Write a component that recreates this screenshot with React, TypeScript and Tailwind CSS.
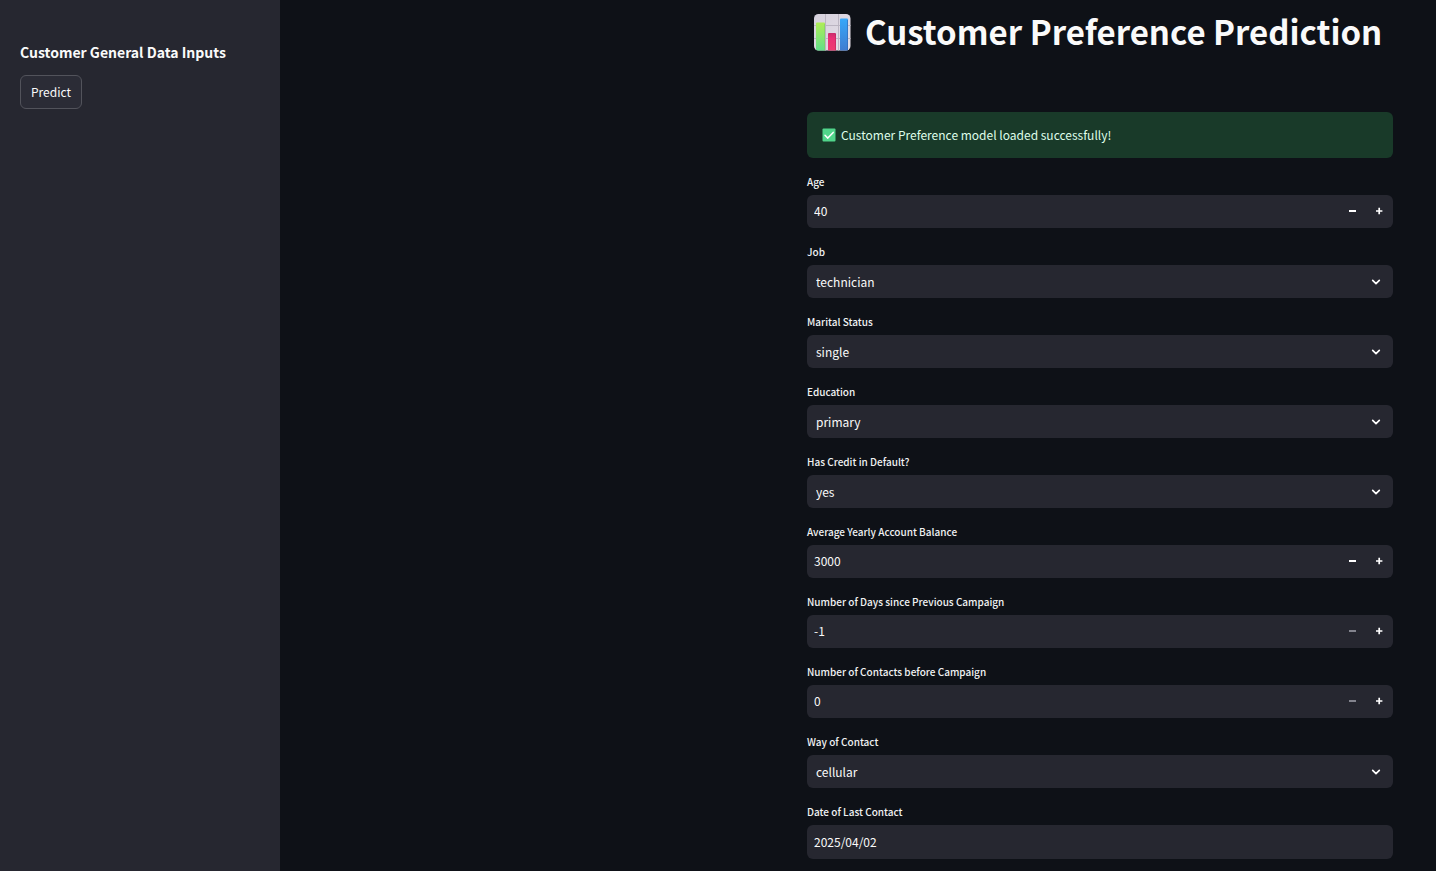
import { useState } from 'react';

type NumberFieldProps = { id: string; label: string; initial: number; min: number };
type SelectFieldProps = { id: string; label: string; options: string[] };

const labelClass = 'block h-[14px] text-[10px] leading-[14px] font-medium text-[#f0f1f3]';
const controlClass =
  'flex w-full items-center overflow-hidden rounded-md bg-[#262730] text-[12px] text-[#fafafa]';

function ChartLogo() {
  return (
    <svg viewBox="0 0 38 38" className="size-[38px] shrink-0" aria-hidden="true">
      <defs>
        <linearGradient id="paper" x1="0" y1="0" x2="1" y2="1">
          <stop offset="0" stopColor="#d5d0dc" />
          <stop offset="1" stopColor="#e5dfe8" />
        </linearGradient>
        <linearGradient id="greenBar" x1="0" y1="0" x2="0" y2="1">
          <stop offset="0" stopColor="#b0ed56" />
          <stop offset="1" stopColor="#60df8c" />
        </linearGradient>
        <linearGradient id="redBar" x1="0" y1="0" x2="0" y2="1">
          <stop offset="0" stopColor="#c92d6c" />
          <stop offset="0.3" stopColor="#e93176" />
          <stop offset="1" stopColor="#ee3c70" />
        </linearGradient>
        <linearGradient id="blueBar" x1="0" y1="0" x2="0" y2="1">
          <stop offset="0" stopColor="#38a8fa" />
          <stop offset="1" stopColor="#407bd0" />
        </linearGradient>
        <clipPath id="sheet">
          <rect x="1" y="1" width="36.5" height="36.5" rx="4.5" />
        </clipPath>
      </defs>
      <g clipPath="url(#sheet)">
        <rect width="38" height="38" fill="url(#paper)" />
        <path d="M12.5 0v38M25.5 0v38M0 12.5h38M0 25.5h38" stroke="#bbb5c2" strokeWidth="1" />
        <rect x="3" y="9.5" width="9" height="28.5" rx="1" fill="url(#greenBar)" />
        <rect x="15" y="20" width="8" height="18" rx="1" fill="url(#redBar)" />
        <rect x="27" y="5.5" width="8" height="32.5" rx="1" fill="url(#blueBar)" />
        <path d="M11.5 11v27" stroke="#83cf62" strokeWidth="1" opacity="0.6" />
        <path d="M22.5 21v17" stroke="#b82860" strokeWidth="1" opacity="0.6" />
        <path d="M34.5 7v31" stroke="#2f64b5" strokeWidth="1" opacity="0.6" />
      </g>
    </svg>
  );
}

function CheckMark() {
  return (
    <svg viewBox="0 0 14 14" className="size-[14px] shrink-0" aria-hidden="true">
      <rect x="0.5" y="0.5" width="13" height="13" rx="1" fill="#51d58b" />
      <path d="M3 7.3l2.8 2.8 5.4-5.7" fill="none" stroke="#ffffff" strokeWidth="1.5" strokeLinecap="round" strokeLinejoin="round" />
    </svg>
  );
}

function NumberField({ id, label, initial, min }: NumberFieldProps) {
  const [value, setValue] = useState(String(initial));
  const current = Number(value);
  return (
    <div>
      <label htmlFor={id} className={labelClass}>{label}</label>
      <div className={`${controlClass} mt-[6px] h-[33px] pr-px pb-px`}>
        <input
          id={id}
          inputMode="numeric"
          value={value}
          onChange={(e) => setValue(e.target.value)}
          className="h-full min-w-0 flex-1 bg-transparent pb-px pl-[7px] outline-none"
        />
        <button
          type="button"
          aria-label={`Decrease ${label}`}
          disabled={current <= min}
          onClick={() => setValue(String(current - 1))}
          className="flex h-full w-[27px] items-center justify-center text-white disabled:text-[#83848e]"
        >
          <svg viewBox="0 0 8 8" className="size-2" aria-hidden="true">
            <path d="M1 3h7v2h-7z" fill="currentColor" />
          </svg>
        </button>
        <button
          type="button"
          aria-label={`Increase ${label}`}
          onClick={() => setValue(String(current + 1))}
          className="flex h-full w-[27px] items-center justify-center text-white"
        >
          <svg viewBox="0 0 8 8" className="size-2" aria-hidden="true">
            <path d="M1 4h6.4M4.2 0.8v6.4" stroke="currentColor" strokeWidth="1.7" />
          </svg>
        </button>
      </div>
    </div>
  );
}

function SelectField({ id, label, options }: SelectFieldProps) {
  return (
    <div>
      <label htmlFor={id} className={labelClass}>{label}</label>
      <div className="mt-[6px] grid items-center">
        <select id={id} className={`${controlClass} col-start-1 row-start-1 h-[33px] appearance-none pl-[9px] outline-none`}>
          {options.map((option) => (
            <option key={option}>{option}</option>
          ))}
        </select>
        <svg
          viewBox="0 0 10 10"
          className="pointer-events-none col-start-1 row-start-1 mr-3 size-[10px] justify-self-end"
          aria-hidden="true"
        >
          <path d="M1.7 3.4L5 6.6l3.3-3.2" fill="none" stroke="#ffffff" strokeWidth="1.7" strokeLinecap="round" strokeLinejoin="round" />
        </svg>
      </div>
    </div>
  );
}

export default function App() {
  return (
    <div className="flex h-screen overflow-hidden bg-[#0e1117] font-['Noto_Sans_CJK_SC','Noto_Sans',sans-serif] text-[#fafafa]">
      <aside className="w-[280px] shrink-0 bg-[#262730] px-5 pt-[42px]">
        <h2 className="text-[14px] leading-5 font-bold whitespace-nowrap">Customer General Data Inputs</h2>
        <button
          type="button"
          className="mt-[13px] flex h-[34px] items-center rounded-md border border-[#52535b] bg-[#2b2c36] px-[10px] text-[12px]"
        >
          Predict
        </button>
      </aside>
      <main className="flex min-w-0 flex-1 justify-end overflow-hidden pr-[43px]">
        <div className="w-[586px]">
          <h1 className="flex items-center gap-[14px] pt-[13px] pl-[6px] text-[33px] leading-[36px] font-bold whitespace-nowrap">
            <ChartLogo />
            <span className="pb-[2px]">Customer Preference Prediction</span>
          </h1>
          <div
            role="status"
            className="mt-[61px] flex h-[46px] items-center gap-[5px] rounded-md bg-[#193a29] px-[15px] text-[12px] text-[#dffde9]"
          >
            <CheckMark />
            Customer Preference model loaded successfully!
          </div>
          <form className="mt-[17px] flex flex-col gap-[17px]" onSubmit={(e) => e.preventDefault()}>
            <NumberField id="age" label="Age" initial={40} min={18} />
            <SelectField id="job" label="Job" options={['technician', 'management', 'services', 'student', 'retired']} />
            <SelectField id="marital" label="Marital Status" options={['single', 'married', 'divorced']} />
            <SelectField id="education" label="Education" options={['primary', 'secondary', 'tertiary']} />
            <SelectField id="default" label="Has Credit in Default?" options={['yes', 'no']} />
            <NumberField id="balance" label="Average Yearly Account Balance" initial={3000} min={0} />
            <NumberField id="days" label="Number of Days since Previous Campaign" initial={-1} min={-1} />
            <NumberField id="contacts" label="Number of Contacts before Campaign" initial={0} min={0} />
            <SelectField id="contact" label="Way of Contact" options={['cellular', 'telephone']} />
            <div>
              <label htmlFor="date" className={labelClass}>Date of Last Contact</label>
              <input id="date" type="text" defaultValue="2025/04/02" className={`${controlClass} mt-[6px] h-[34px] pb-px pl-[7px] outline-none`} />
            </div>
          </form>
        </div>
      </main>
    </div>
  );
}
